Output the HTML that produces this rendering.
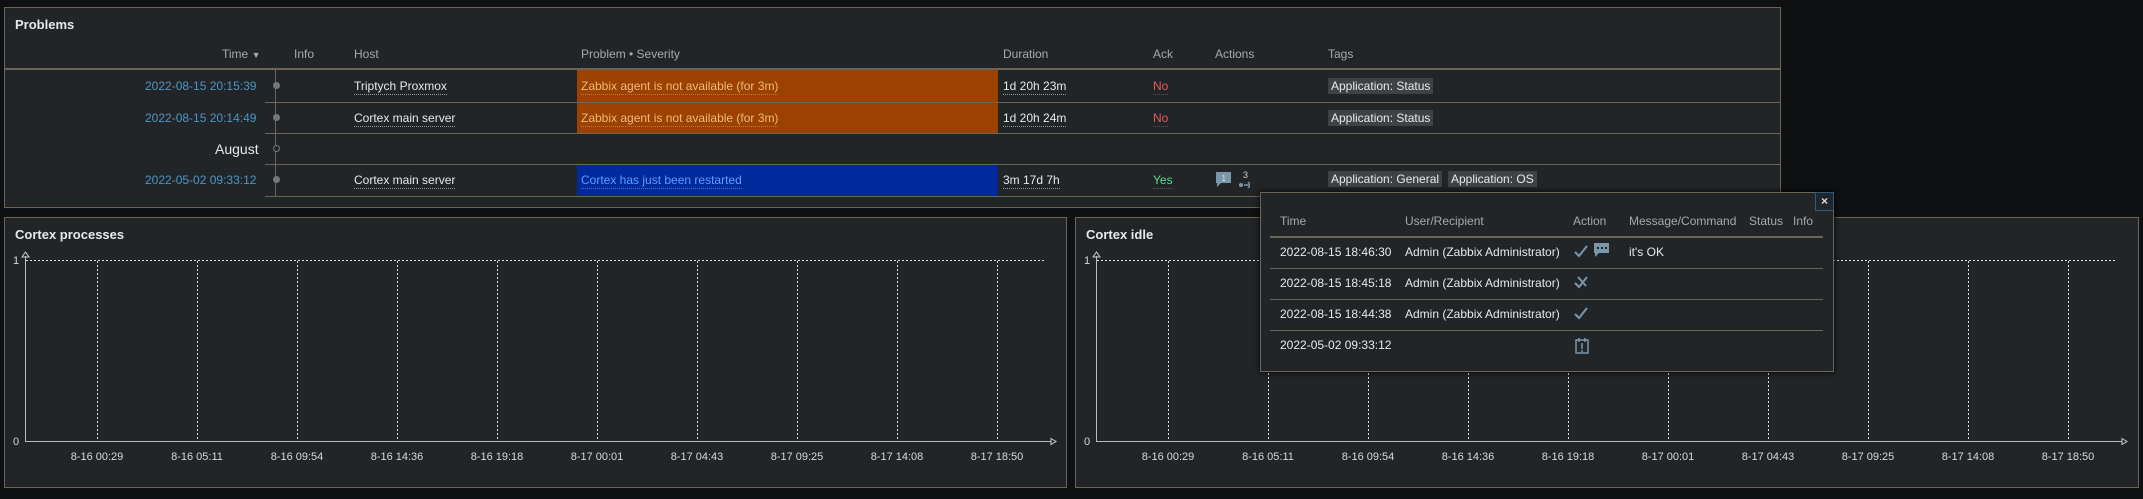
<!DOCTYPE html>
<html><head><meta charset="utf-8"><style>
*{margin:0;padding:0;box-sizing:border-box}
body{width:2143px;height:499px;background:#0e1012;font-family:"Liberation Sans",sans-serif;font-size:12px;color:#e8e8e8;position:relative;overflow:hidden}
.a{position:absolute;white-space:nowrap}
.panel{position:absolute;background:#222527;border:1px solid #6b6457}
.h{color:#a8a8a8}
.t{font-weight:bold;font-size:13px;color:#e8e8e8}
.lnk{color:#4a96c5}
.u{border-bottom:1px dotted #999;padding-bottom:1px}
.line{position:absolute;height:1px;background:#6b6457}
.tag{position:absolute;background:#3f4245;color:#e8e8e8;padding:1px 3px;height:16px;line-height:14px}
</style></head><body>
<div class="panel" style="left:4px;top:7px;width:1777px;height:201px"></div>
<div class="a t" style="left:15px;top:17px">Problems</div>
<div class="a h" style="left:222px;top:47px">Time <span style="font-size:9px">▼</span></div>
<div class="a h" style="left:294px;top:47px">Info</div>
<div class="a h" style="left:354px;top:47px">Host</div>
<div class="a h" style="left:581px;top:47px">Problem • Severity</div>
<div class="a h" style="left:1003px;top:47px">Duration</div>
<div class="a h" style="left:1153px;top:47px">Ack</div>
<div class="a h" style="left:1215px;top:47px">Actions</div>
<div class="a h" style="left:1328px;top:47px">Tags</div>
<div class="a" style="left:5px;top:68px;width:1775px;height:2px;background:#6b6457"></div>
<div class="a" style="left:577px;top:70px;width:421px;height:63px;background:#9b4201"></div>
<div class="a" style="left:577px;top:165px;width:421px;height:31px;background:#002a9c"></div>
<div class="line" style="left:265px;top:102px;width:1515px"></div>
<div class="line" style="left:265px;top:133px;width:1515px"></div>
<div class="line" style="left:265px;top:164px;width:1515px"></div>
<div class="line" style="left:265px;top:196px;width:1515px"></div>
<div class="a" style="left:275px;top:70px;width:1px;height:127px;background:#6b6457"></div>
<div class="a" style="left:273px;top:82px;width:7px;height:7px;border-radius:50%;background:#777"></div>
<div class="a" style="left:273px;top:114px;width:7px;height:7px;border-radius:50%;background:#777"></div>
<div class="a" style="left:273px;top:145px;width:7px;height:7px;border-radius:50%;border:1px solid #777;background:#222527"></div>
<div class="a" style="left:273px;top:176px;width:7px;height:7px;border-radius:50%;background:#777"></div>
<div class="a lnk" style="left:145px;top:79px">2022-08-15 20:15:39</div>
<div class="a lnk" style="left:145px;top:111px">2022-08-15 20:14:49</div>
<div class="a" style="left:215px;top:141px;font-size:14px">August</div>
<div class="a lnk" style="left:145px;top:173px">2022-05-02 09:33:12</div>
<span class="a u" style="left:354px;top:79px">Triptych Proxmox</span>
<span class="a u" style="left:354px;top:111px">Cortex main server</span>
<span class="a u" style="left:354px;top:173px">Cortex main server</span>
<span class="a u" style="left:581px;top:79px;color:#f0b87c;border-color:#c07a40">Zabbix agent is not available (for 3m)</span>
<span class="a u" style="left:581px;top:111px;color:#f0b87c;border-color:#c07a40">Zabbix agent is not available (for 3m)</span>
<span class="a u" style="left:581px;top:173px;color:#5c9dff;border-color:#4070c0">Cortex has just been restarted</span>
<span class="a u" style="left:1003px;top:79px">1d 20h 23m</span>
<span class="a u" style="left:1003px;top:111px">1d 20h 24m</span>
<span class="a u" style="left:1003px;top:173px">3m 17d 7h</span>
<span class="a u" style="left:1153px;top:79px;color:#e45959;border-color:#555">No</span>
<span class="a u" style="left:1153px;top:111px;color:#e45959;border-color:#555">No</span>
<span class="a u" style="left:1153px;top:173px;color:#59db8f;border-color:#555">Yes</span>
<svg class="a" style="left:1215px;top:170px" width="35" height="20"><path d="M1 2h15v11H6l-4 4v-4H1z" fill="#7a96ab"/><text x="6.5" y="11" font-size="8" fill="#dde" font-family="Liberation Sans">1</text><text x="28" y="8" font-size="9" fill="#ccc" font-family="Liberation Sans">3</text><circle cx="26" cy="15" r="2" fill="#7a96ab"/><path d="M29 15h6M33 12l3 3-3 3" stroke="#7a96ab" stroke-width="1.5" fill="none"/></svg>
<div class="tag" style="left:1328px;top:78px">Application: Status</div>
<div class="tag" style="left:1328px;top:110px">Application: Status</div>
<div class="tag" style="left:1328px;top:171px">Application: General</div>
<div class="tag" style="left:1448px;top:171px">Application: OS</div>

<div class="panel" style="left:4px;top:217px;width:1063px;height:271px"></div>
<div class="panel" style="left:1075px;top:217px;width:1064px;height:271px"></div>
<div class="a t" style="left:15px;top:227px">Cortex processes</div>
<div class="a t" style="left:1086px;top:227px">Cortex idle</div>
<svg class="a" style="left:0;top:0" width="2143" height="499">
<g fill="none" stroke="#e0e0e0" stroke-width="1">
<path d="M25.5 256V441.5H1051M1096.5 256V441.5H2122" stroke="#bbb"/>
<path d="M22 257l3.5-5 3.5 5zM1093 257l3.5-5 3.5 5zM1051 438.5l5 3-5 3zM2122 438.5l5 3-5 3z" stroke="#ccc"/>
<g stroke-dasharray="2,2">
<path d="M26 260.5H1045M1097 260.5H2116"/>
<path d="M97.5 261V441M197.5 261V441M297.5 261V441M397.5 261V441M497.5 261V441M597.5 261V441M697.5 261V441M797.5 261V441M897.5 261V441M997.5 261V441"/>
<path d="M1168.5 261V441M1268.5 261V441M1368.5 261V441M1468.5 261V441M1568.5 261V441M1668.5 261V441M1768.5 261V441M1868.5 261V441M1968.5 261V441M2068.5 261V441"/>
</g></g>
<g font-family="Liberation Sans" font-size="11" fill="#d8d8d8" text-anchor="middle">
<text x="16" y="264">1</text><text x="16" y="445">0</text>
<text x="1087" y="264">1</text><text x="1087" y="445">0</text>
<text x="97" y="460">8-16 00:29</text><text x="197" y="460">8-16 05:11</text><text x="297" y="460">8-16 09:54</text><text x="397" y="460">8-16 14:36</text><text x="497" y="460">8-16 19:18</text><text x="597" y="460">8-17 00:01</text><text x="697" y="460">8-17 04:43</text><text x="797" y="460">8-17 09:25</text><text x="897" y="460">8-17 14:08</text><text x="997" y="460">8-17 18:50</text>
<text x="1168" y="460">8-16 00:29</text><text x="1268" y="460">8-16 05:11</text><text x="1368" y="460">8-16 09:54</text><text x="1468" y="460">8-16 14:36</text><text x="1568" y="460">8-16 19:18</text><text x="1668" y="460">8-17 00:01</text><text x="1768" y="460">8-17 04:43</text><text x="1868" y="460">8-17 09:25</text><text x="1968" y="460">8-17 14:08</text><text x="2068" y="460">8-17 18:50</text>
</g></svg>

<div class="panel" style="left:1260px;top:192px;width:574px;height:180px;box-shadow:0 0 6px #000"></div>
<div class="a" style="left:1815px;top:192px;width:19px;height:19px;border:1px solid #2e5a80;color:#ddd;font-weight:bold;text-align:center;line-height:16px;font-size:12px">×</div>
<div class="a h" style="left:1280px;top:214px">Time</div>
<div class="a h" style="left:1405px;top:214px">User/Recipient</div>
<div class="a h" style="left:1573px;top:214px">Action</div>
<div class="a h" style="left:1629px;top:214px">Message/Command</div>
<div class="a h" style="left:1749px;top:214px">Status</div>
<div class="a h" style="left:1793px;top:214px">Info</div>
<div class="a" style="left:1270px;top:236px;width:553px;height:2px;background:#6b6457"></div>
<div class="line" style="left:1270px;top:268px;width:553px"></div>
<div class="line" style="left:1270px;top:299px;width:553px"></div>
<div class="line" style="left:1270px;top:330px;width:553px"></div>
<div class="a" style="left:1280px;top:245px">2022-08-15 18:46:30</div>
<div class="a" style="left:1405px;top:245px">Admin (Zabbix Administrator)</div>
<div class="a" style="left:1629px;top:245px">it's OK</div>
<div class="a" style="left:1280px;top:276px">2022-08-15 18:45:18</div>
<div class="a" style="left:1405px;top:276px">Admin (Zabbix Administrator)</div>
<div class="a" style="left:1280px;top:307px">2022-08-15 18:44:38</div>
<div class="a" style="left:1405px;top:307px">Admin (Zabbix Administrator)</div>
<div class="a" style="left:1280px;top:338px">2022-05-02 09:33:12</div>
<svg class="a" style="left:1573px;top:240px" width="40" height="120">
<g fill="none" stroke="#7a96ab" stroke-width="2">
<path d="M2 12l4 4 8-10"/>
<path d="M2 74l4 4 8-10"/>
<path d="M2 43l4 4 8-10M5 37l8 9"/>
<rect x="3" y="100" width="12" height="13" stroke-width="1.5"/>
</g>
<path d="M21 3h15v10H26l-4 4v-4h-1z" fill="#7a96ab"/>
<g fill="#222"><rect x="24" y="7" width="2" height="2"/><rect x="28" y="7" width="2" height="2"/><rect x="32" y="7" width="2" height="2"/></g>
<path d="M9 103v6M9 110v2M6 98v4M12 98v4" stroke="#7a96ab" stroke-width="1.5"/>
</svg>
</body></html>
